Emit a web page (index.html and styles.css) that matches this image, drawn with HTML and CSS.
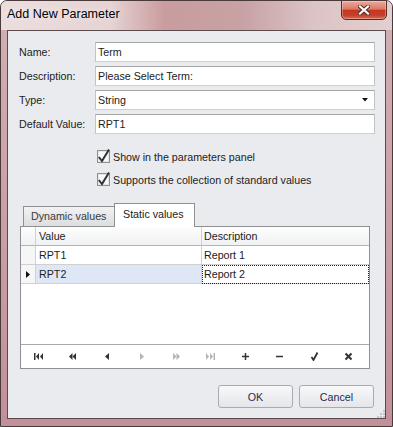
FILE: index.html
```html
<!DOCTYPE html>
<html lang="en">
  <head>
    <meta charset="UTF-8" />
    <title>Add New Parameter</title>
    <link rel="stylesheet" href="styles.css">
  </head>
  <body>
    <div class="window">
      <div class="titlebar">
        <span class="title">Add New Parameter</span>
        <div class="close-btn">
          <svg width="12" height="10" viewBox="0 0 12 10">
            <path d="M2 1.5 L10 8.5 M10 1.5 L2 8.5" stroke="#4a2a26" stroke-width="4" stroke-linecap="square" fill="none"/>
            <path d="M2 1.5 L10 8.5 M10 1.5 L2 8.5" stroke="#fff" stroke-width="2.2" stroke-linecap="square" fill="none"/>
          </svg>
        </div>
      </div>

      <div class="frame">
        <div class="client">
          <div class="form">
            <label>Name:</label>
            <div class="field">Term</div>
            <label>Description:</label>
            <div class="field">Please Select Term:</div>
            <label>Type:</label>
            <div class="field">
              String
              <svg class="arrow" width="6" height="4" viewBox="0 0 6 4"><polygon points="0,0 6,0 3,3.5" fill="#111"/></svg>
            </div>
            <label>Default Value:</label>
            <div class="field">RPT1</div>
          </div>

          <div class="checks">
            <div class="check">
              <svg width="13" height="13" viewBox="0 0 13 13">
                <rect x="0.5" y="0.5" width="12" height="12" fill="#e4e6ea" stroke="#8e8f8f"/>
                <rect x="2" y="2" width="9" height="9" fill="#f8f8f9"/>
                <path d="M1.8 7 L5 11 L12 -0.5" stroke="#333" stroke-width="2" fill="none"/>
              </svg>
              Show in the parameters panel
            </div>
            <div class="check">
              <svg width="13" height="13" viewBox="0 0 13 13">
                <rect x="0.5" y="0.5" width="12" height="12" fill="#e4e6ea" stroke="#8e8f8f"/>
                <rect x="2" y="2" width="9" height="9" fill="#f8f8f9"/>
                <path d="M1.8 7 L5 11 L12 -0.5" stroke="#333" stroke-width="2" fill="none"/>
              </svg>
              Supports the collection of standard values
            </div>
          </div>

          <div class="tabs">
            <div class="tab">Dynamic values</div>
            <div class="tab active">Static values</div>
          </div>

          <div class="page">
            <div class="row header">
              <div class="ind"></div>
              <div class="cell">Value</div>
              <div class="cell">Description</div>
            </div>
            <div class="row">
              <div class="ind"></div>
              <div class="cell">RPT1</div>
              <div class="cell">Report 1</div>
            </div>
            <div class="row selected">
              <div class="ind">
                <svg width="4" height="7" viewBox="0 0 4 7"><polygon points="0,0 4,3.5 0,7" fill="#111"/></svg>
              </div>
              <div class="cell">RPT2</div>
              <div class="cell focused">Report 2</div>
            </div>
            <div class="empty"></div>
            <div class="navigator">
              <svg width="9" height="7" viewBox="0 0 9 7"><rect x="0" y="0" width="1.5" height="7" fill="#333"/><polygon points="5,0 2,3.5 5,7" fill="#333"/><polygon points="9,0 6,3.5 9,7" fill="#333"/></svg>
              <svg width="7" height="7" viewBox="0 0 7 7"><polygon points="3.5,0 0,3.5 3.5,7" fill="#333"/><polygon points="7,0 3.5,3.5 7,7" fill="#333"/></svg>
              <svg width="4" height="7" viewBox="0 0 4 7"><polygon points="4,0 0,3.5 4,7" fill="#333"/></svg>
              <svg width="4" height="7" viewBox="0 0 4 7"><polygon points="0,0 4,3.5 0,7" fill="#b4b4b4"/></svg>
              <svg width="7" height="7" viewBox="0 0 7 7"><polygon points="0,0 3.5,3.5 0,7" fill="#b4b4b4"/><polygon points="3.5,0 7,3.5 3.5,7" fill="#b4b4b4"/></svg>
              <svg width="9" height="7" viewBox="0 0 9 7"><polygon points="0,0 3,3.5 0,7" fill="#b4b4b4"/><polygon points="4,0 7,3.5 4,7" fill="#b4b4b4"/><rect x="7.5" y="0" width="1.5" height="7" fill="#b4b4b4"/></svg>
              <svg width="9" height="9" viewBox="0 0 9 9"><path d="M4.5 1 V8 M1 4.5 H8" stroke="#333" stroke-width="1.5"/></svg>
              <svg width="9" height="9" viewBox="0 0 9 9"><path d="M1 4.5 H8" stroke="#333" stroke-width="1.5"/></svg>
              <svg width="9" height="9" viewBox="0 0 9 9"><path d="M1.5 5 L3.5 8 L7.5 0.5" stroke="#333" stroke-width="1.8" fill="none"/></svg>
              <svg width="9" height="9" viewBox="0 0 9 9"><path d="M1.5 1.5 L7.5 7.5 M7.5 1.5 L1.5 7.5" stroke="#333" stroke-width="2"/></svg>
            </div>
          </div>

          <div class="buttons">
            <button>OK</button>
            <button>Cancel</button>
          </div>

          <div class="grip">
            <svg width="8" height="9" viewBox="0 0 8 9">
              <rect x="6" y="1" width="2" height="2" fill="#c2c4c8"/>
              <rect x="3" y="4" width="2" height="2" fill="#c2c4c8"/>
              <rect x="6" y="4" width="2" height="2" fill="#c2c4c8"/>
              <rect x="0" y="7" width="2" height="2" fill="#c2c4c8"/>
              <rect x="3" y="7" width="2" height="2" fill="#c2c4c8"/>
              <rect x="6" y="7" width="2" height="2" fill="#c2c4c8"/>
            </svg>
          </div>
        </div>
      </div>
    </div>
  </body>
</html>
```

FILE: styles.css
```css
body {
  margin: 0;
  background: #fff;
  font-family: "Liberation Sans", Arial, sans-serif;
}

.window {
  width: 393px;
  height: 427px;
  box-sizing: border-box;
  border: 1px solid #4a3a3c;
  border-radius: 7px 7px 0 0;
  background: linear-gradient(to bottom, #d2b0b2, #c2909a);
  display: flex;
  flex-direction: column;
  overflow: hidden;
}

.titlebar {
  height: 29px;
  flex: none;
  display: flex;
  justify-content: space-between;
  align-items: flex-start;
  padding-left: 6px;
  background: linear-gradient(90deg, #eddede 0%, #e6d3d3 28%, #c99c9e 42%, #c8a2a4 62%, #dcc4c4 80%, #e3cfcf 100%);
}

.title {
  margin-top: 6px;
  font-size: 12.5px;
  line-height: 15px;
  color: #000;
  text-shadow: 0 0 6px rgba(255, 255, 255, 0.9);
}

.close-btn {
  width: 46px;
  height: 20px;
  box-sizing: border-box;
  margin-top: -1px;
  margin-right: 5px;
  border: 1px solid #5e2b24;
  border-radius: 0 0 5px 5px;
  background: linear-gradient(to bottom, #eaa99b 0%, #dc7a66 45%, #c4361f 52%, #c7402a 80%, #dc6c52 100%);
  box-shadow: inset 0 0 0 1px rgba(255, 255, 255, 0.3);
  display: flex;
  justify-content: center;
  align-items: center;
}

.frame {
  flex: 1;
  display: flex;
  padding: 0 6px 7px;
}

.client {
  flex: 1;
  border: 1px solid #5a4a4c;
  background: #eaebef;
  display: flex;
  flex-direction: column;
  font-size: 10.7px;
  color: #1b1b1b;
}

.form {
  display: grid;
  grid-template-columns: 76px 280px;
  row-gap: 4px;
  margin: 11px 0 0 11px;
}

.form label {
  line-height: 20px;
}

.field {
  height: 20px;
  box-sizing: border-box;
  border: 1px solid;
  border-color: #a7a7a7 #c3c3c3 #cfcfcf #c3c3c3;
  background: #fff;
  padding: 0 6px 0 2px;
  display: flex;
  align-items: center;
  justify-content: space-between;
}

.checks {
  margin: 11px 0 0 89px;
}

.check {
  height: 23px;
  display: flex;
  align-items: center;
  gap: 3px;
}

.check svg {
  overflow: visible;
}

.tabs {
  display: flex;
  align-items: flex-end;
  height: 23px;
  margin: 12px 0 0 15px;
  position: relative;
  z-index: 1;
}

.tab {
  width: 92px;
  height: 20px;
  box-sizing: border-box;
  border: 1px solid #8f9092;
  border-bottom: none;
  padding-left: 7px;
  line-height: 19px;
  background: linear-gradient(to bottom, #f2f2f3, #dcdde0);
  color: #3a3a3a;
}

.tab.active {
  width: 81px;
  height: 24px;
  margin-left: -1px;
  margin-bottom: -1px;
  padding-left: 8px;
  line-height: 20px;
  background: #fff;
  color: #1b1b1b;
}

.page {
  margin-left: 12px;
  width: 350px;
  height: 143px;
  box-sizing: border-box;
  border: 1px solid #8f9092;
  background: #fff;
  display: flex;
  flex-direction: column;
}

.row {
  display: grid;
  grid-template-columns: 15px 166px 167px;
  height: 19px;
}

.row > div {
  box-sizing: border-box;
  border-bottom: 1px solid #d0d0d0;
  border-right: 1px solid #d0d0d0;
  line-height: 18px;
}

.row > div:last-child {
  border-right: none;
}

.header > div {
  background: linear-gradient(to bottom, #fdfdfd, #f0f1f3);
  border-bottom-color: #b4b4b4;
}

.ind {
  background: #f6f6f7;
  display: flex;
  align-items: center;
  justify-content: center;
}

.cell {
  padding-left: 3px;
}

.row > .cell:last-child {
  padding-left: 2px;
}

.selected .cell {
  background: #dfe7f6;
}

.selected .cell.focused {
  background: #fff;
  outline: 1px dotted #222;
  outline-offset: -1px;
}

.empty {
  flex: 1;
}

.navigator {
  height: 24px;
  box-sizing: border-box;
  border-top: 1px solid #a8a9ac;
  display: grid;
  grid-template-columns: repeat(10, 34.5px);
  align-items: center;
  justify-items: center;
}

.buttons {
  display: flex;
  justify-content: flex-end;
  gap: 6px;
  margin-top: 16px;
  padding-right: 11px;
}

.buttons button {
  width: 75px;
  height: 23px;
  border: 1px solid #a9abaf;
  border-radius: 3px;
  background: linear-gradient(to bottom, #f8f8fa, #e4e6ea);
  font-family: inherit;
  font-size: 10.7px;
  color: #1f2d4d;
  padding: 0;
}

.grip {
  align-self: flex-end;
  height: 9px;
  margin-top: 1px;
  display: flex;
}
```
